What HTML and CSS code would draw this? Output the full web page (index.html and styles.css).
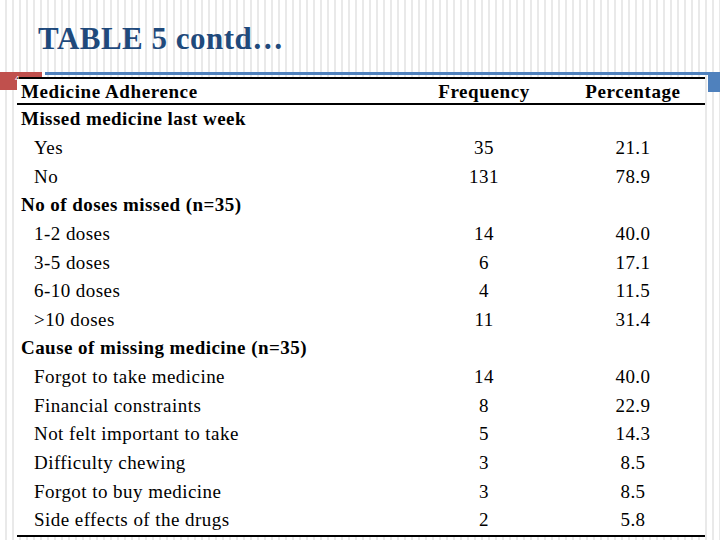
FILE: index.html
```html
<!DOCTYPE html>
<html>
<head>
<meta charset="utf-8">
<link rel="stylesheet" href="styles.css">
</head>
<body>
<div class="slide">
  <h1 class="title">TABLE 5 contd…</h1>
  <div class="band">
    <div class="band-red"></div>
    <div class="band-line"></div>
    <div class="band-square"></div>
  </div>
  <div class="table-wrap">
    <span class="slide-num">4</span>
    <div class="table">
      <div class="row head">
        <div class="c1">Medicine Adherence</div>
        <div class="c2">Frequency</div>
        <div class="c3">Percentage</div>
      </div>
      <div class="body">
        <div class="row"><div class="c1 b">Missed medicine last week</div><div class="c2"></div><div class="c3"></div></div>
        <div class="row"><div class="c1 in">Yes</div><div class="c2">35</div><div class="c3">21.1</div></div>
        <div class="row"><div class="c1 in">No</div><div class="c2">131</div><div class="c3">78.9</div></div>
        <div class="row"><div class="c1 b">No of doses missed (n=35)</div><div class="c2"></div><div class="c3"></div></div>
        <div class="row"><div class="c1 in">1-2 doses</div><div class="c2">14</div><div class="c3">40.0</div></div>
        <div class="row"><div class="c1 in">3-5 doses</div><div class="c2">6</div><div class="c3">17.1</div></div>
        <div class="row"><div class="c1 in">6-10 doses</div><div class="c2">4</div><div class="c3">11.5</div></div>
        <div class="row"><div class="c1 in">&gt;10 doses</div><div class="c2">11</div><div class="c3">31.4</div></div>
        <div class="row"><div class="c1 b">Cause of missing medicine (n=35)</div><div class="c2"></div><div class="c3"></div></div>
        <div class="row"><div class="c1 in">Forgot to take medicine</div><div class="c2">14</div><div class="c3">40.0</div></div>
        <div class="row"><div class="c1 in">Financial constraints</div><div class="c2">8</div><div class="c3">22.9</div></div>
        <div class="row"><div class="c1 in">Not felt important to take</div><div class="c2">5</div><div class="c3">14.3</div></div>
        <div class="row"><div class="c1 in">Difficulty chewing</div><div class="c2">3</div><div class="c3">8.5</div></div>
        <div class="row"><div class="c1 in">Forgot to buy medicine</div><div class="c2">3</div><div class="c3">8.5</div></div>
        <div class="row"><div class="c1 in">Side effects of the drugs</div><div class="c2">2</div><div class="c3">5.8</div></div>
      </div>
    </div>
  </div>
</div>
</body>
</html>
```
FILE: styles.css
```css
html, body {
  margin: 0;
  padding: 0;
}
body {
  width: 720px;
  height: 540px;
  overflow: hidden;
  background: repeating-linear-gradient(90deg, #ffffff 0 5px, #e9e9e9 5px 7px);
  font-family: "Liberation Serif", "Times New Roman", serif;
  color: #000;
}
.slide {
  width: 720px;
  height: 540px;
}
.title {
  margin: 0;
  height: 72px;
  padding-left: 38px;
  box-sizing: border-box;
  padding-top: 21px;
  font-size: 31px;
  line-height: 36px;
  font-weight: bold;
  color: #1f4a7c;
  letter-spacing: 0.5px;
}
.band {
  display: flex;
  align-items: flex-start;
  height: 20px;
}
.band-red {
  width: 42px;
  height: 18px;
  background: #c0504d;
}
.band-line {
  flex: 1;
  margin-left: 3px;
  height: 3px;
  background: #4f81bd;
}
.band-square {
  width: 12px;
  height: 20px;
  background: #4f81bd;
}
.table-wrap {
  position: relative;
  margin-top: -15px;
  margin-left: 17px;
  width: 688px;
  background: #fff;
}
.slide-num {
  position: absolute;
  left: -2px;
  top: -3px;
  font-family: "Liberation Sans", Arial, sans-serif;
  font-size: 8px;
  color: #fff;
}
.table {
  border-top: 2px solid #000;
  border-bottom: 2px solid #000;
}
.row {
  display: grid;
  grid-template-columns: 393px 148px 147px;
  height: 28.65px;
  align-items: center;
  font-size: 19px;
  letter-spacing: 0.45px;
}
.row.head {
  height: 26px;
  font-weight: bold;
  letter-spacing: 0.6px;
  border-bottom: 2px solid #000;
  padding-top: 1px;
  box-sizing: border-box;
}
.c1 {
  padding-left: 4px;
  white-space: nowrap;
}
.c1.in {
  padding-left: 17px;
}
.c1.b {
  font-weight: bold;
}
.c2, .c3 {
  text-align: center;
}
.c3 {
  padding-left: 3px;
}
```
